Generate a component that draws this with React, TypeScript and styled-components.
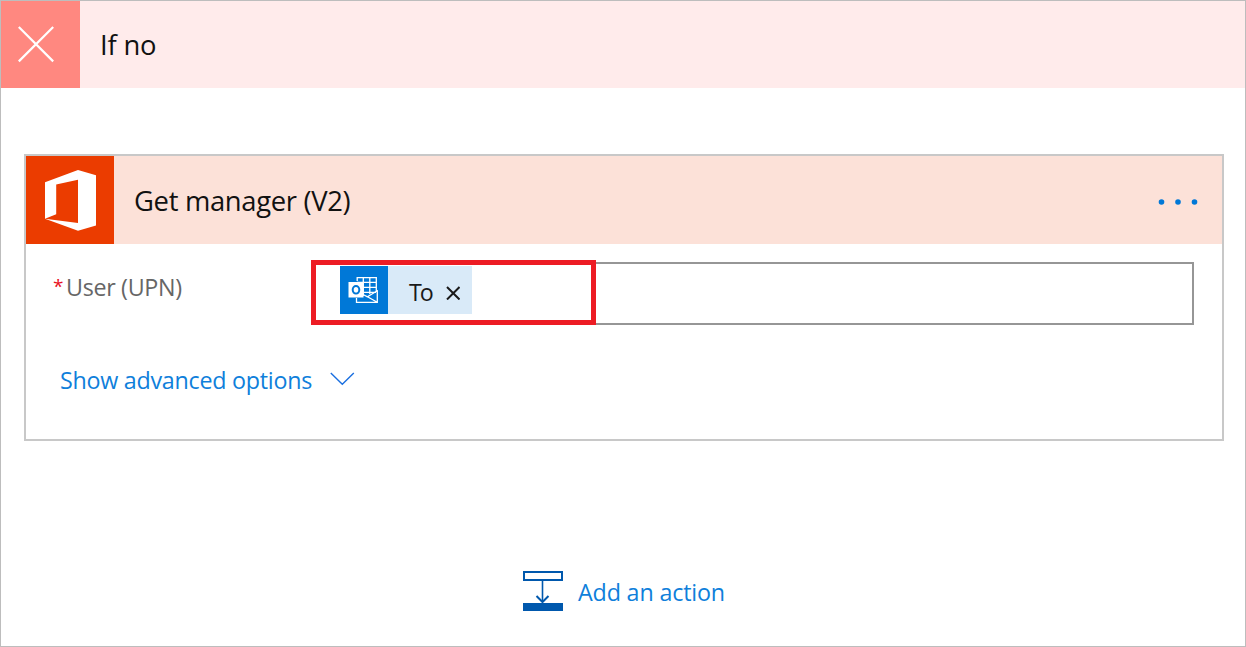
import React from 'react';
import styled, { createGlobalStyle } from 'styled-components';

const GlobalStyle = createGlobalStyle`
  *, *::before, *::after { box-sizing: border-box; }
  body {
    margin: 0;
    background: #ffffff;
    font-family: 'Open Sans', 'Noto Sans', sans-serif;
    font-weight: 400;
  }
  svg { display: block; flex: none; }
`;

const Branch = styled.main`
  display: flex;
  flex-direction: column;
  width: 1246px;
  height: 647px;
  border: 1px solid #bdbdbd;
  background: #ffffff;
  overflow: hidden;
`;

const BranchHeader = styled.header`
  display: flex;
  align-items: center;
  flex: none;
  height: 87px;
  background: #ffebeb;
`;

const BranchIcon = styled.div`
  width: 79px;
  height: 87px;
  margin-right: 20px;
  background: #ff8880;
`;

const Title = styled.h2<{ $spacing: number }>`
  margin: 0;
  font-size: 27.4px;
  font-weight: 400;
  line-height: 36px;
  letter-spacing: ${(p) => p.$spacing}px;
  color: #111111;
  white-space: nowrap;
`;

const Card = styled.section`
  flex: none;
  height: 287px;
  margin: 66px 21px 0 23px;
  border: 2px solid #c8c8c8;
`;

const CardHeader = styled.header`
  display: flex;
  align-items: center;
  height: 88px;
  padding-right: 22px;
  background: #fce1d8;

  ${Title} {
    padding-top: 2px;
  }
`;

const CardIcon = styled.div`
  width: 88px;
  height: 88px;
  margin-right: 20px;
  background: #eb3c00;
`;

const MenuButton = styled.button`
  margin: 4px 0 0 auto;
  padding: 0;
  border: 0;
  background: none;
`;

const FieldRow = styled.div`
  display: flex;
  align-items: flex-start;
  padding: 18px 28px 0 27px;
`;

const Label = styled.label`
  display: flex;
  width: 259px;
  padding-top: 9px;
  font-size: 23.3px;
  line-height: 32px;
  letter-spacing: -0.33px;
  color: #666666;
  white-space: nowrap;
`;

const Required = styled.span`
  width: 13px;
  font-size: 19px;
  line-height: 31px;
  color: #e81123;
`;

const Field = styled.div`
  position: relative;
  flex: 1;
  height: 63px;
  padding: 2px 0 0 26px;
  border: 2px solid #969696;
`;

const Highlight = styled.div`
  position: absolute;
  top: -4px;
  left: -3px;
  width: 285px;
  height: 65px;
  border: 5px solid #ed1c24;
`;

const Token = styled.div`
  display: flex;
  align-items: center;
  width: 132px;
  height: 48px;
  background: #d9eaf8;
`;

const TokenIcon = styled.div`
  width: 48px;
  height: 48px;
  background: #0078d7;
`;

const TokenText = styled.span`
  width: 37px;
  margin-left: 21px;
  padding-top: 3px;
  font-size: 23.3px;
  line-height: 32px;
  letter-spacing: -2px;
  color: #1a1a1a;
`;

const RemoveIcon = styled.svg`
  margin-top: 6px;
`;

const Link = styled.a<{ $spacing: number }>`
  font-size: 23.3px;
  line-height: 32px;
  letter-spacing: ${(p) => p.$spacing}px;
  color: #0f7fdb;
  white-space: nowrap;
`;

const AdvancedRow = styled.div`
  display: flex;
  width: 329px;
  justify-content: space-between;
  padding: 39px 0 0 34px;
`;

const AddRow = styled.div`
  display: flex;
  gap: 15px;
  margin: 130px 0 0 522px;
`;

const AddLabel = styled.div`
  padding-top: 5px;
`;

export default function App() {
  return (
    <>
      <GlobalStyle />
      <Branch>
        <BranchHeader>
          <BranchIcon>
            <svg width="79" height="87" viewBox="1 1 79 87">
              <path d="M18.8 27 L53.2 61.4 M53.2 27 L18.8 61.4" stroke="#fff" strokeWidth="2.2" />
            </svg>
          </BranchIcon>
          <Title $spacing={-0.2}>If no</Title>
        </BranchHeader>

        <Card>
          <CardHeader>
            <CardIcon>
              <svg width="88" height="88" viewBox="26 156 88 88">
                <path
                  fill="#fff"
                  fillRule="evenodd"
                  d="M45 182.3 L78 170 L96 175.2 V225.5 L78 230.8 L45 218.7 L78 223 V179.8 L56.2 184.5 V214.3 L45 218.7 Z"
                />
              </svg>
            </CardIcon>
            <Title $spacing={-0.32}>Get manager (V2)</Title>
            <MenuButton aria-label="Menu">
              <svg width="42" height="8" viewBox="1158 198 42 8" fill="#0078d7">
                <circle cx="1161.5" cy="202" r="2.8" />
                <circle cx="1178" cy="202" r="2.8" />
                <circle cx="1194.5" cy="202" r="2.8" />
              </svg>
            </MenuButton>
          </CardHeader>

          <FieldRow>
            <Label>
              <Required>*</Required>
              User (UPN)
            </Label>
            <Field>
              <Token>
                <TokenIcon>
                  <svg width="48" height="48" viewBox="340 266 48 48">
                    <path
                      fill="none"
                      stroke="#fff"
                      strokeWidth="1.3"
                      d="M357.2 281 V277.6 H376.3 V292 M357 282.3 H376.3 M363.3 277.6 V296 M369.8 277.6 V294 M363 287.3 H376.3 M363 292.3 H376"
                    />
                    <path
                      fill="none"
                      stroke="#fff"
                      strokeWidth="1.3"
                      d="M356.5 298 V302.3 H377.3 V290.8 L367.5 296.8 L377.3 302.3 M363 294.5 L367.5 296.8"
                    />
                    <rect x="348.5" y="282" width="15" height="15.5" fill="#fff" />
                    <ellipse cx="356" cy="289.8" rx="3.3" ry="3.8" fill="none" stroke="#0078d7" strokeWidth="2" />
                  </svg>
                </TokenIcon>
                <TokenText>To</TokenText>
                <RemoveIcon width="14" height="14" viewBox="446 286 14 14">
                  <path d="M447 287 L459.5 299.5 M459.5 287 L447 299.5" stroke="#1a1a1a" strokeWidth="2" />
                </RemoveIcon>
              </Token>
              <Highlight />
            </Field>
          </FieldRow>

          <AdvancedRow>
            <Link $spacing={-0.27}>Show advanced options</Link>
            <svg width="25" height="32" viewBox="330 364 25 32">
              <path d="M330.8 373 L342.3 384.3 L353.8 373" fill="none" stroke="#1a6fe0" strokeWidth="1.4" />
            </svg>
          </AdvancedRow>
        </Card>

        <AddRow>
          <svg width="40" height="40" viewBox="523 571 40 40">
            <rect x="524" y="572" width="38" height="8" fill="none" stroke="#0058ad" strokeWidth="2" />
            <path d="M542.5 581 V602" stroke="#0058ad" strokeWidth="1.6" />
            <path d="M536.5 596 L542.5 602 L548.5 596" fill="none" stroke="#0058ad" strokeWidth="2" />
            <rect x="523" y="603" width="40" height="8" fill="#0058ad" />
          </svg>
          <AddLabel>
            <Link $spacing={-0.17}>Add an action</Link>
          </AddLabel>
        </AddRow>
      </Branch>
    </>
  );
}
